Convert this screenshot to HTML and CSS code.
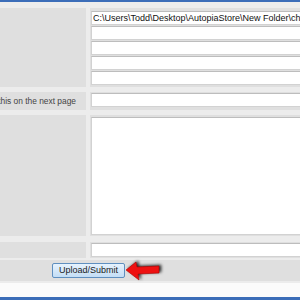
FILE: index.html
```html
<!DOCTYPE html>
<html lang="en">
  <head>
    <meta charset="utf-8">
    <title>Upload files</title>
    <link rel="stylesheet" href="styles.css">
  </head>
  <body>
    <div class="topbar"></div>

    <form class="upload" name="upload">
      <div class="row">
        <div class="label"></div>
        <div class="field files">
          <input type="text" value="C:\Users\Todd\Desktop\AutopiaStore\New Folder\chair.jpg">
          <input type="text">
          <input type="text">
          <input type="text">
          <input type="text">
        </div>
      </div>

      <div class="row row-short">
        <div class="label"><span>You can describe this on the next page</span></div>
        <div class="field"><input type="text"></div>
      </div>

      <div class="row row-text">
        <div class="label"></div>
        <div class="field"><textarea></textarea></div>
      </div>

      <div class="row row-last">
        <div class="label"></div>
        <div class="field"><input type="text"></div>
      </div>

      <div class="actions">
        <button type="button">Upload/Submit</button>
        <svg class="arrow" width="38" height="22" viewBox="0 0 38 22">
          <polygon points="1,10 11,2 12,7 34,6 34,13 13,14 14,20" fill="#ee1111" stroke="#b00000" stroke-width="0.6"/>
        </svg>
      </div>
    </form>

    <div class="footer"></div>
    <div class="bottombar"></div>
  </body>
</html>
```

FILE: styles.css
```css
* {
  box-sizing: border-box;
}

html, body {
  margin: 0;
  padding: 0;
  overflow: hidden;
  font: 9px/1.2 "Liberation Sans", Arial, sans-serif;
  color: #333;
  background: #fbfbfb;
}

.topbar,
.bottombar {
  background: #3b6db8;
}

.topbar {
  height: 2px;
}

.bottombar {
  height: 3px;
}

.upload {
  width: 420px;
  padding: 6px 0 2px;
  background: #ececec;
}

.row {
  display: flex;
  gap: 4px;
  margin-top: 5px;
}

.row:first-child {
  margin-top: 0;
}

.row-last {
  margin-top: 6px;
}

.label {
  display: flex;
  align-items: center;
  justify-content: flex-end;
  flex: 0 0 86px;
  min-width: 0;
  padding-right: 10px;
  font-size: 8.4px;
  white-space: nowrap;
  color: #444;
  background: #dfdfdf;
}

.label span {
  flex: none;
}

.field {
  flex: 1;
  padding: 1px 0 1px 1px;
  background: #dfdfdf;
}

.files {
  display: flex;
  flex-direction: column;
  gap: 1px;
  padding: 3px 0 2px 1px;
}

.row-short .field {
  padding: 1px 0 3px 1px;
}

.row-text .field {
  padding: 2px 0 1px 1px;
}

input,
textarea {
  display: block;
  width: 100%;
  margin: 0;
  font: inherit;
  color: #111;
  background: #fff;
  border: 1px solid #d2d2d2;
  border-top-color: #bdbdbd;
  border-radius: 0;
}

input {
  height: 14px;
  padding: 0 1px;
}

textarea {
  height: 118px;
  resize: none;
}

.actions {
  display: flex;
  align-items: center;
  height: 21px;
  margin-top: 2px;
  padding-left: 52px;
  background: #dfdfdf;
}

.actions button {
  height: 15px;
  padding: 0 6px;
  font: inherit;
  color: #1a1a1a;
  background: linear-gradient(#e6f2fd, #c4def5);
  border: 1px solid #5f8fbf;
  border-radius: 2px;
}

.arrow {
  display: block;
  filter: drop-shadow(2px -1px 1.5px rgba(0, 0, 0, .8));
}

.footer {
  height: 14px;
  background: #fbfbfb;
}
```
